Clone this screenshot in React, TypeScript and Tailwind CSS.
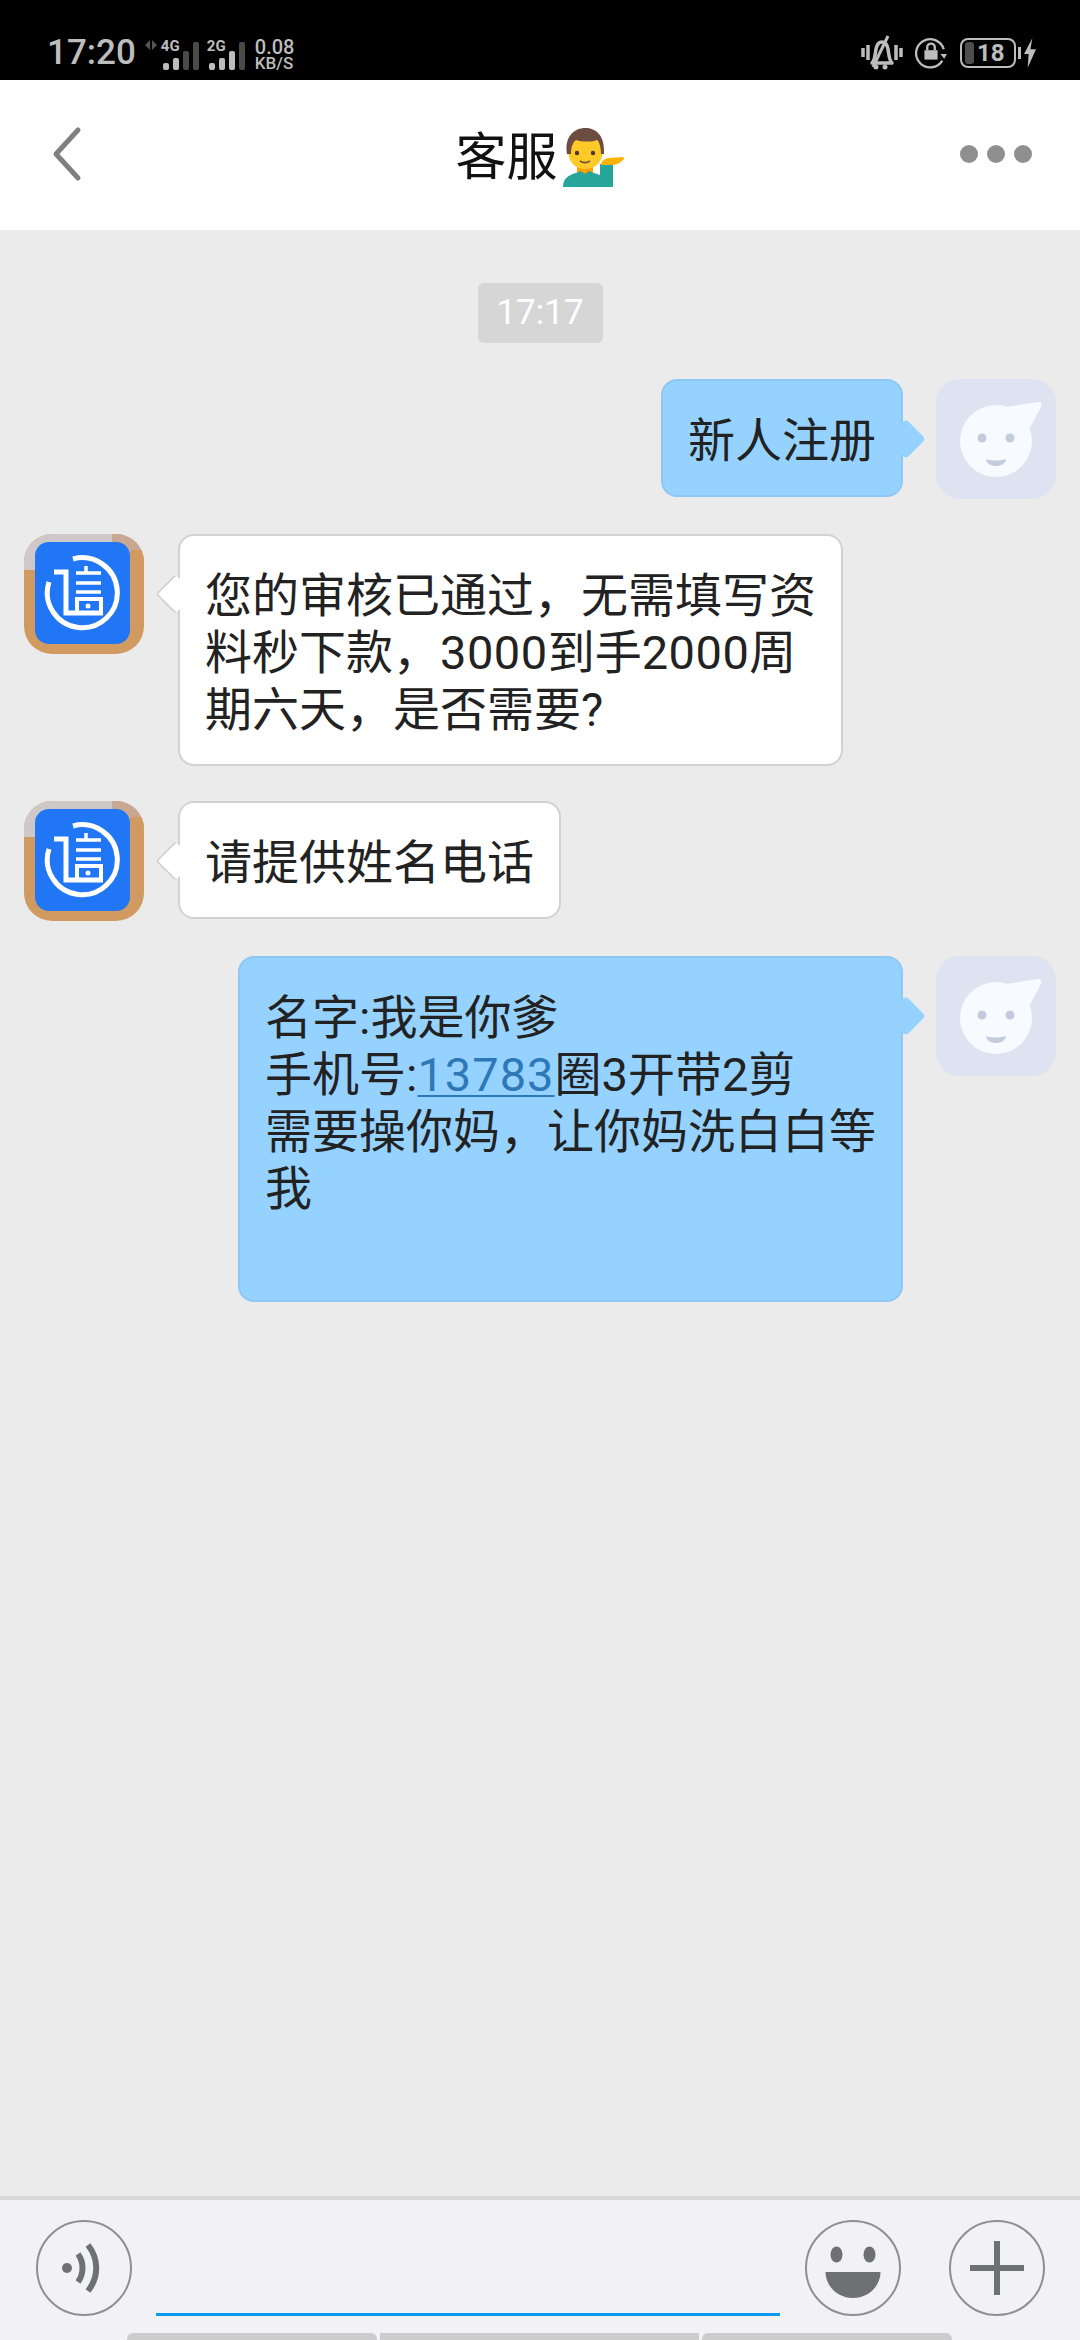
import React from "react";

const BASE = "font-['Roboto','Noto_Sans_CJK_SC',sans-serif]";

function SignalBars({ label, lit }: { label: string; lit: number }) {
  const xs = [2, 12, 22, 32];
  const hs = [7, 12, 19, 28];
  return (
    <div className="relative w-[38px] h-[30px]">
      <svg width="38" height="30" viewBox="0 0 38 30" className="block">
        {xs.map((x, i) => (
          <rect key={x} x={x} y={30 - hs[i]} width="6" height={hs[i]} rx="2" fill={i < lit ? "#bdbdbd" : "#4a4a4a"} />
        ))}
      </svg>
      <span className="absolute left-0 -top-px text-[15px] leading-[15px] font-bold">{label}</span>
    </div>
  );
}

function StatusBar() {
  return (
    <div className={`h-20 shrink-0 bg-black flex items-end justify-between pl-[47px] pr-11 pb-[10px] text-[#bdbdbd] ${BASE}`}>
      <div className="flex items-end">
        <span className="text-[35px] leading-[34px] font-medium">17:20</span>
        <svg width="12" height="12" viewBox="0 0 12 12" className="ml-[9px] mb-[19px]">
          <path d="M5 1v10L0 6zM7 1v10l5-5z" fill="#555" />
        </svg>
        <div className="ml-1">
          <SignalBars label="4G" lit={2} />
        </div>
        <div className="ml-2">
          <SignalBars label="2G" lit={3} />
        </div>
        <div className="ml-[10px] flex flex-col items-start font-medium">
          <span className="text-[20px] leading-[18px]">0.08</span>
          <span className="text-[17px] leading-[14px]">KB/S</span>
        </div>
      </div>
      <div className="flex items-end">
        <svg width="42" height="36" viewBox="0 0 42 36" fill="none" stroke="#bdbdbd">
          <path d="M2 14v9M7 11v15M35 11v15M40 14v9" strokeWidth="3.5" />
          <path d="M11 29c3-3 3-8 4-14 1-5 3-7 6-7s5 2 6 7c1 6 1 11 4 14z" strokeWidth="3.5" strokeLinejoin="round" />
          <path d="M12 33 L27 2" strokeWidth="3" />
          <circle cx="15" cy="33" r="2.5" fill="#bdbdbd" stroke="none" />
          <circle cx="24" cy="33" r="2.5" fill="#bdbdbd" stroke="none" />
        </svg>
        <svg width="32" height="32" viewBox="0 0 34 34" fill="none" stroke="#bdbdbd" className="ml-3 mb-[1px]">
          <path d="M29 25A15 15 0 1 1 30.5 13" strokeWidth="2.5" />
          <path d="M27 18l4 5 3-5" fill="#bdbdbd" stroke="none" />
          <path d="M13 14v-3a4 4 0 0 1 8 0v3" strokeWidth="2.5" />
          <rect x="10" y="14" width="14" height="10" fill="#bdbdbd" stroke="none" />
        </svg>
        <div className="ml-[13px] h-[30px] w-14 rounded-lg border-2 border-[#bdbdbd] flex items-center pl-[3px] mb-[2px]">
          <span className="w-[9px] h-[22px] rounded-[3px] bg-[#4d4d4d]" />
          <span className="ml-[3px] text-[24px] leading-none font-bold">18</span>
        </div>
        <span className="ml-[2px] mb-[11px] w-[3px] h-3 bg-[#bdbdbd]" />
        <svg width="12" height="32" viewBox="0 0 13 32" className="ml-[3px] mb-[1px]">
          <path d="M9 0 L0 17h5l-1 15 9-20H7z" fill="#bdbdbd" />
        </svg>
      </div>
    </div>
  );
}

// Man tipping hand, drawn beside the contact name.
function TippingHand() {
  return (
    <svg width="62" height="60" viewBox="0 0 62 60" className="block">
      <rect x="14" y="34" width="16" height="14" fill="#ffa000" />
      <path d="M0 59c0-8 5-12 13-14l5-2 4 3 4-3 5 2 6 2V36h13v23z" fill="#26a69a" />
      <path d="M38 37c0-3 2-5 4-6l4-1 13-1c2 0 3 2 1 3-2 2-5 4-9 5z" fill="#ffb300" />
      <path d="M5 22c0-13 8-18 17-18s18 5 18 18c0 12-8 19-18 19S5 34 5 22z" fill="#ffca28" />
      <path d="M4 26C1 8 12 0 22 0c11 0 20 7 19 26h-3c0-7-2-13-4-14-5 2-15 2-21 0-3 2-5 7-5 14z" fill="#6d4c41" />
      <circle cx="14" cy="25" r="2.2" fill="#4e342e" />
      <circle cx="30" cy="25" r="2.2" fill="#4e342e" />
      <path d="M17 33c3 2 7 2 10 0" stroke="#6d4c41" strokeWidth="1.6" fill="none" />
    </svg>
  );
}

function Header() {
  return (
    <div className={`h-[150px] shrink-0 bg-white grid grid-cols-[1fr_auto_1fr] items-center pb-[2px] ${BASE}`}>
      <svg width="32" height="56" viewBox="0 0 32 56" fill="none" className="ml-[51px]">
        <path d="M27 4 L5 28 L27 52" stroke="#808080" strokeWidth="5" strokeLinecap="round" strokeLinejoin="round" />
      </svg>
      <div className="flex items-center pt-[7px] text-[51px] leading-none text-[#111]">
        <span>客服</span>
        <span className="ml-[5px]">
          <TippingHand />
        </span>
      </div>
      <div className="flex justify-end gap-[9px] pr-[48px]">
        <span className="w-[18px] h-[18px] rounded-full bg-[#8f8f8f]" />
        <span className="w-[18px] h-[18px] rounded-full bg-[#8f8f8f]" />
        <span className="w-[18px] h-[18px] rounded-full bg-[#8f8f8f]" />
      </div>
    </div>
  );
}

function UserAvatar() {
  return (
    <div className="w-[120px] h-[120px] shrink-0 rounded-3xl bg-[#dde3f1]">
      <svg width="120" height="120" viewBox="0 0 120 120" className="block">
        <circle cx="60" cy="62" r="36" fill="#f7faff" />
        <path d="M70 28 L102 23 Q107 23 105 28 L90 56 Z" fill="#f7faff" />
        <circle cx="46" cy="59" r="4.5" fill="#c4cbdd" />
        <circle cx="74" cy="59" r="4.5" fill="#c4cbdd" />
        <path d="M50 80c6 2 13 2 20 0-1 5-5 7-10 7s-9-2-10-7z" fill="#c4cbdd" />
      </svg>
    </div>
  );
}

// Service account logo: a framed blue tile with a ringed emblem.
function ServiceAvatar() {
  return (
    <div className="relative w-[120px] h-[120px] shrink-0 rounded-[28px] overflow-hidden bg-[#d09a60]">
      <div className="absolute left-0 top-0 w-full h-9 bg-[#cfc8c8]" />
      <div className="absolute left-[88px] top-0 w-8 h-4 bg-[#c9a893]" />
      <div className="absolute right-0 top-4 w-[14px] h-5 bg-[#d09a60]" />
      <div className="absolute left-[11px] top-2 w-[95px] h-[102px] rounded-[14px] bg-[#2176f5] flex items-center justify-center">
        <svg width="78" height="78" viewBox="0 0 78 78" fill="none" stroke="#fff">
          <path d="M29 5A35 35 0 1 1 5 28" strokeWidth="5" />
          <path d="M10 18h12v41h37" strokeWidth="5" />
          <path d="M32 19h25M32 29h25M32 38h25M42 12v7" strokeWidth="3.5" />
          <rect x="33" y="45" width="24" height="14" strokeWidth="4" />
          <circle cx="44" cy="52" r="2.5" fill="#fff" stroke="none" />
        </svg>
      </div>
    </div>
  );
}

function Bubble({ mine, className, children }: { mine?: boolean; className?: string; children: React.ReactNode }) {
  return (
    <div
      className={`relative rounded-2xl border-2 px-[25px] pt-[31px] pb-[26px] text-[47px] leading-[57px] whitespace-nowrap text-[#222] ${
        mine ? "bg-[#96d2ff] border-[#8cc7f5]" : "bg-white border-[#d2d2d2]"
      } ${className ?? ""}`}
    >
      <span
        className={`absolute top-[44px] w-7 h-7 rotate-45 rounded-[4px] ${
          mine
            ? "-right-[19px] bg-[#96d2ff]"
            : "-left-[19px] bg-white border-l-2 border-b-2 border-[#d2d2d2]"
        }`}
      />
      <span className="relative block">{children}</span>
    </div>
  );
}

function Footer() {
  return (
    <div className="h-[144px] shrink-0 border-t-4 border-[#d8d8d8] bg-[#f2f2f6] pt-5">
      <div className="flex items-start pl-9">
        <div className="w-24 h-24 rounded-full border-2 border-[#8e8e93] flex items-center justify-center">
          <svg width="50" height="56" viewBox="0 0 50 56" fill="none" stroke="#6e7074">
            <circle cx="8" cy="28" r="5" fill="#6e7074" stroke="none" />
            <path d="M19 14c6 8 6 20 0 28" strokeWidth="6" />
            <path d="M29 5c11 14 11 32 0 46" strokeWidth="6" />
          </svg>
        </div>
        <div className="ml-6 w-[624px] h-24 flex items-end">
          <div className="w-full h-[3px] bg-[#0a9af0]" />
        </div>
        <div className="ml-[25px] w-24 h-24 rounded-full border-2 border-[#8e8e93] flex items-center justify-center">
          <svg width="56" height="60" viewBox="0 0 56 60" fill="#6e7074">
            <ellipse cx="11.5" cy="16.5" rx="6" ry="8" />
            <ellipse cx="44.5" cy="16.5" rx="6" ry="8" />
            <path d="M.5 34h55c0 14-12 26-27.5 26S.5 48 .5 34z" />
          </svg>
        </div>
        <div className="ml-[48px] w-24 h-24 rounded-full border-2 border-[#8e8e93] flex items-center justify-center">
          <svg width="54" height="54" viewBox="0 0 54 54" fill="#6e7074">
            <rect x="24" y="0" width="6" height="54" />
            <rect x="0" y="24" width="54" height="6" />
          </svg>
        </div>
      </div>
      <div className="mt-[17px] pl-[127px] flex gap-[3px]">
        <div className="w-[250px] h-[7px] rounded-t-md bg-[#cccccc]" />
        <div className="w-[319px] h-[7px] bg-[#cccccc]" />
        <div className="w-[250px] h-[7px] rounded-t-md bg-[#cccccc]" />
      </div>
    </div>
  );
}

export default function App() {
  return (
    <div className={`w-[1080px] h-[2340px] overflow-hidden flex flex-col bg-[#ebebeb] ${BASE}`}>
      <StatusBar />
      <Header />
      <main className="flex-1 flex flex-col pt-[53px] px-6">
        <div className="self-center w-[125px] h-[60px] rounded-md bg-[#d6d6d6] text-white text-[35px] flex items-center justify-center">
          17:17
        </div>

        <div className="mt-9 flex justify-end items-start">
          <Bubble mine>新人注册</Bubble>
          <div className="ml-[33px]">
            <UserAvatar />
          </div>
        </div>

        <div className="mt-[35px] flex items-start">
          <ServiceAvatar />
          <div className="ml-[34px]">
            <Bubble>
              您的审核已通过，无需填写资
              <br />
              料秒下款，<span className="tracking-[0.5px]">3000</span>到手<span className="tracking-[0.5px]">2000</span>周
              <br />
              期六天，是否需要?
            </Bubble>
          </div>
        </div>

        <div className="mt-[35px] flex items-start">
          <ServiceAvatar />
          <div className="ml-[34px]">
            <Bubble>请提供姓名电话</Bubble>
          </div>
        </div>

        <div className="mt-[35px] flex justify-end items-start">
          <Bubble mine className="w-[665px]">
            名字:我是你爹
            <br />
            手机号:<span className="text-[#2f78b8] tracking-[1px] underline underline-offset-4 decoration-2">13783</span>圈3开带2剪
            <br />
            需要操你妈，让你妈洗白白等
            <br />
            我
            <br />
            <br />
          </Bubble>
          <div className="ml-[33px]">
            <UserAvatar />
          </div>
        </div>
      </main>
      <Footer />
    </div>
  );
}
